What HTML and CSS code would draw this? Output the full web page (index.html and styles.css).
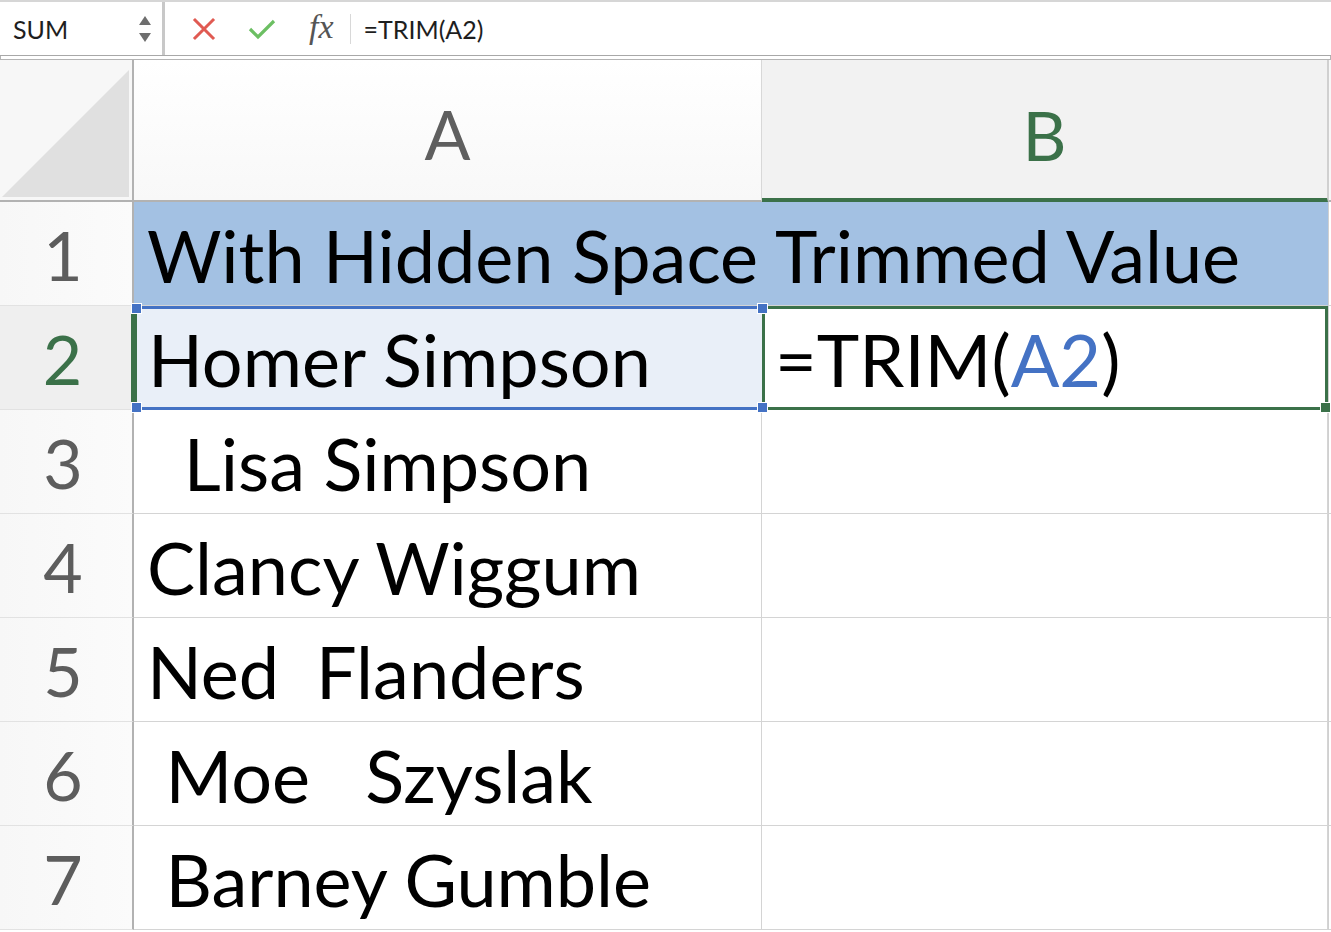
FILE: index.html
```html
<!DOCTYPE html>
<html>
<head>
<meta charset="utf-8">
<link rel="stylesheet" href="styles.css">
</head>
<body>
<div class="fbar">
  <div class="namebox">
    <span class="nametext">SUM</span>
    <svg class="spin" width="14" height="30" viewBox="0 0 14 30">
      <path d="M1 11 L7 2 L13 11 Z" fill="#6e6e6e"/>
      <path d="M1 19 L7 28 L13 19 Z" fill="#6e6e6e"/>
    </svg>
  </div>
  <div class="vsep"></div>
  <div class="tools">
    <svg class="ico" width="26" height="26" viewBox="0 0 26 26">
      <path d="M4 4 L22 22 M22 4 L4 22" stroke="#e05a52" stroke-width="3" stroke-linecap="square"/>
    </svg>
    <svg class="ico" width="30" height="26" viewBox="0 0 30 26">
      <path d="M3 13 L11 21 L27 5" stroke="#6cbf63" stroke-width="3.2" fill="none"/>
    </svg>
    <span class="fx">fx</span>
    <div class="tsep"></div>
    <span class="formula">=TRIM(A2)</span>
  </div>
</div>
<div class="sheet">
  <div class="corner"><div class="tri"></div></div>
  <div class="colh">A</div>
  <div class="colh sel">B</div>
  <div class="edge"></div>

  <div class="rowh">1</div>
  <div class="cell hdr">With Hidden Space</div>
  <div class="cell hdr">Trimmed Value</div>
  <div class="edge"></div>

  <div class="rowh sel">2</div>
  <div class="cell a2">Homer Simpson<span class="h tl"></span><span class="h bl"></span><span class="h tr"></span><span class="h br"></span></div>
  <div class="cell b2">=TRIM(<span class="ref">A2</span>)<span class="h br2"></span></div>
  <div class="edge"></div>

  <div class="rowh">3</div>
  <div class="cell">  Lisa Simpson</div>
  <div class="cell"></div>
  <div class="edge"></div>

  <div class="rowh">4</div>
  <div class="cell">Clancy Wiggum</div>
  <div class="cell"></div>
  <div class="edge"></div>

  <div class="rowh">5</div>
  <div class="cell">Ned  Flanders</div>
  <div class="cell"></div>
  <div class="edge"></div>

  <div class="rowh">6</div>
  <div class="cell"> Moe   Szyslak</div>
  <div class="cell"></div>
  <div class="edge"></div>

  <div class="rowh">7</div>
  <div class="cell"> Barney Gumble</div>
  <div class="cell"></div>
  <div class="edge"></div>
</div>
</body>
</html>
```
FILE: styles.css
```css
html, body {
  margin: 0;
  padding: 0;
  background: #ffffff;
  overflow: hidden;
  width: 1331px;
  height: 932px;
}
body {
  font-family: Lato, "Open Sans", sans-serif;
}
.fbar {
  height: 53px;
  border-top: 2px solid #d6d6d6;
  border-bottom: 1px solid #a8a8a8;
  display: flex;
  align-items: stretch;
  background: #ffffff;
  box-shadow: 0 4px 0 -1px #ffffff, 0 4px 0 0 #b4b4b4;
  margin-bottom: 4px;
}
.namebox {
  width: 160px;
  display: flex;
  align-items: center;
  justify-content: space-between;
  padding: 0 8px 0 13px;
  box-sizing: border-box;
}
.nametext {
  font-size: 25px;
  color: #1e1e1e;
}
.vsep {
  width: 3px;
  background: #c8c8c8;
  margin: 0 0 0 2px;
}
.tools {
  display: flex;
  align-items: center;
  padding-left: 26px;
  flex: 1;
}
.ico {
  display: block;
  margin-right: 30px;
}
.fx {
  font-family: "Liberation Serif", serif;
  font-style: italic;
  font-size: 34px;
  color: #555555;
  margin-left: 2px;
  line-height: 1;
  padding-bottom: 4px;
}
.tsep {
  width: 1px;
  height: 30px;
  background: #d8d8d8;
  margin: 0 13px 0 16px;
}
.formula {
  font-size: 25px;
  color: #1e1e1e;
}
.sheet {
  display: grid;
  grid-template-columns: 134px 628px 566px 1fr;
  grid-template-rows: 142px repeat(7, 104px);
}
.corner {
  background: #f7f7f7;
  border-right: 2px solid #b2b2b2;
  border-bottom: 2px solid #b2b2b2;
  position: relative;
  box-sizing: border-box;
}
.tri {
  position: absolute;
  right: 3px;
  bottom: 3px;
  width: 127px;
  height: 127px;
  background: #e0e0e0;
  clip-path: polygon(100% 0, 100% 100%, 0 100%);
}
.colh {
  background: linear-gradient(#ffffff, #f8f8f8);
  border-right: 1px solid #d8d8d8;
  border-bottom: 2px solid #b2b2b2;
  box-sizing: border-box;
  display: flex;
  align-items: center;
  justify-content: center;
  font-size: 68px;
  color: #5f5f5f;
  padding-top: 6px;
}
.colh.sel {
  background: #f2f2f2;
  color: #3b7149;
  border-bottom: 4px solid #3b7149;
  border-right: 1px solid #d0d0d0;
  padding-top: 10px;
}
.edge {
  border-left: 1px solid #d0d0d0;
  border-bottom: 1px solid #d4d4d4;
  background: #ffffff;
}
.sheet > .edge:nth-child(4) {
  background: #f7f7f7;
  border-bottom: 2px solid #b2b2b2;
}
.rowh {
  background: linear-gradient(90deg, #f7f7f7, #fbfbfb);
  border-right: 2px solid #b2b2b2;
  border-bottom: 1px solid #e2e2e2;
  box-sizing: border-box;
  display: flex;
  align-items: center;
  justify-content: center;
  font-size: 68px;
  color: #5d5d5d;
  padding-top: 2px;
  padding-right: 6px;
}
.rowh.sel {
  background: #efefef;
  color: #3b7149;
  border-right: 3px solid #3b7149;
}
.cell {
  border-right: 1px solid #d4d4d4;
  border-bottom: 1px solid #d4d4d4;
  box-sizing: border-box;
  display: flex;
  align-items: center;
  padding-left: 13px;
  padding-top: 2px;
  font-size: 72px;
  color: #000000;
  white-space: pre;
  position: relative;
  overflow: visible;
}
.cell.hdr {
  background: #a3c1e3;
  border-right-color: #a3c1e3;
}
.cell.a2 {
  background: #e9eff8;
  border: 3px solid #4472c4;
  border-left-color: #3b7149;
  border-right: none;
  padding-left: 11px;
}
.cell.b2 {
  border: 3px solid #3b7149;
  padding-left: 10px;
}
.ref {
  color: #4472c4;
}
.h {
  position: absolute;
  width: 9px;
  height: 9px;
  background: #4472c4;
  border: 1px solid #ffffff;
  z-index: 2;
}
.h.tl { left: -6px; top: -6px; }
.h.bl { left: -6px; bottom: -6px; }
.h.tr { right: -6px; top: -6px; }
.h.br { right: -6px; bottom: -6px; }
.h.br2 {
  right: -6px;
  bottom: -6px;
  background: #3b7149;
}
```
